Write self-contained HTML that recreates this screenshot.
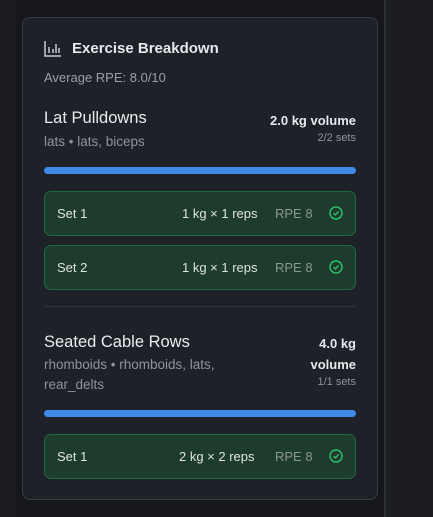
<!DOCTYPE html>
<html><head><style>
*{margin:0;padding:0;box-sizing:border-box}
body{width:433px;height:517px;background:#1b1d22;font-family:"Liberation Sans",sans-serif;position:relative;overflow:hidden}
.col{position:absolute;left:16px;top:0;width:370px;height:517px;background:#16171b;border-right:2px solid #2c2f36}
.card{position:absolute;left:22px;top:17px;width:356px;height:483px;background:#1f2128;border:1px solid #393c44;border-radius:8px}
.a{position:absolute;white-space:nowrap}
.bar{position:absolute;left:44px;width:312px;height:7px;border-radius:4px;background:#4189e6}
.set{position:absolute;left:44px;width:312px;height:45px;background:#1d3c2e;border:1px solid #206a3f;border-radius:7px;color:#dfe4e1;font-size:13px}
.set span{position:absolute;top:14px}
.set .r{color:#8a9690}
.set svg{position:absolute;left:284px;top:14px}
</style></head><body>
<div class="col"></div>
<div class="card"></div>
<svg class="a" style="left:44px;top:40px" width="18" height="17" viewBox="0 0 18 17" fill="none" stroke="#c8cbd1" stroke-width="1.5"><path d="M1 1V16H17M5 7V13M9 9V13M12 4V13M15 8V13"/></svg>
<div class="a" style="left:72px;top:40px;color:#e6e8ec;font-size:15px;font-weight:bold">Exercise Breakdown</div>
<div class="a" style="left:44px;top:70px;color:#9a9ea6;font-size:13px">Average RPE: 8.0/10</div>
<div class="a" style="left:44px;top:109px;color:#e9ebee;font-size:16.5px">Lat Pulldowns</div>
<div class="a" style="left:44px;top:134px;color:#8f939b;font-size:13.5px">lats • lats, biceps</div>
<div class="a" style="right:77px;top:113px;color:#e6e8ec;font-size:13px;font-weight:bold">2.0 kg volume</div>
<div class="a" style="right:77px;top:132px;color:#8f939b;font-size:11px">2/2 sets</div>
<div class="bar" style="top:167px"></div>
<div class="set" style="top:191px"><span style="left:12px">Set 1</span><span style="left:137px">1 kg × 1 reps</span><span class="r" style="left:230px">RPE 8</span><svg width="14" height="14" viewBox="0 0 14 14" fill="none" stroke="#2fc46b" stroke-width="1.4"><circle cx="7" cy="7" r="6"/><path d="M4.5 7.2l1.8 1.7 3.3-3.4"/></svg></div>
<div class="set" style="top:245px"><span style="left:12px">Set 2</span><span style="left:137px">1 kg × 1 reps</span><span class="r" style="left:230px">RPE 8</span><svg width="14" height="14" viewBox="0 0 14 14" fill="none" stroke="#2fc46b" stroke-width="1.4"><circle cx="7" cy="7" r="6"/><path d="M4.5 7.2l1.8 1.7 3.3-3.4"/></svg></div>
<div class="a" style="left:44px;top:306px;width:312px;height:1px;background:#2f323a"></div>
<div class="a" style="left:44px;top:333px;color:#e9ebee;font-size:16.5px">Seated Cable Rows</div>
<div class="a" style="left:44px;top:355px;color:#8f939b;font-size:13.5px;line-height:20px">rhomboids • rhomboids, lats,<br>rear_delts</div>
<div class="a" style="right:77px;top:333px;color:#e6e8ec;font-size:13px;font-weight:bold;text-align:right;line-height:21px">4.0 kg<br>volume</div>
<div class="a" style="right:77px;top:376px;color:#8f939b;font-size:11px">1/1 sets</div>
<div class="bar" style="top:410px"></div>
<div class="set" style="top:434px"><span style="left:12px">Set 1</span><span style="left:134px">2 kg × 2 reps</span><span class="r" style="left:230px">RPE 8</span><svg width="14" height="14" viewBox="0 0 14 14" fill="none" stroke="#2fc46b" stroke-width="1.4"><circle cx="7" cy="7" r="6"/><path d="M4.5 7.2l1.8 1.7 3.3-3.4"/></svg></div>
</body></html>
